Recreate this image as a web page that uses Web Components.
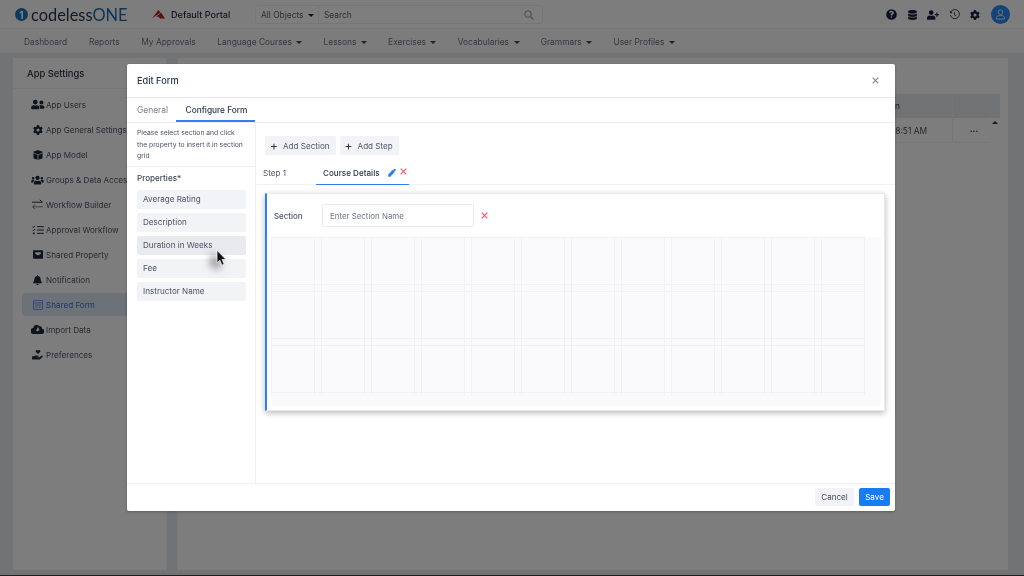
<!DOCTYPE html>
<html><head><meta charset="utf-8"><style>
html,body{margin:0;padding:0;height:100%;overflow:hidden;background:#e4e7ea;font-family:Inter,"Liberation Sans",sans-serif}
</style></head><body>
<app-root></app-root>
<script>
const I={
help:'<svg viewBox="0 0 512 512" width="11" height="11"><path fill="currentColor" d="M256 8a248 248 0 1 0 0 496 248 248 0 0 0 0-496zm0 400a36 36 0 1 1 0-72 36 36 0 0 1 0 72zm44-122v6a12 12 0 0 1-12 12h-64a12 12 0 0 1-12-12v-12c0-42 26-60 48-72 18-10 28-16 28-30 0-18-22-30-40-30-24 0-34 11-50 31a12 12 0 0 1-16 2l-38-28a12 12 0 0 1-3-16c26-39 60-61 112-61 55 0 113 43 113 99 0 75-66 76-66 111z"/></svg>',
db:'<svg viewBox="0 0 448 512" width="9" height="10"><path fill="currentColor" d="M448 73v46c0 40-100 73-224 73S0 159 0 119V73C0 33 100 0 224 0s224 33 224 73zm0 103v103c0 40-100 73-224 73S0 319 0 279V176c48 33 136 48 224 48s176-15 224-48zm0 160v103c0 40-100 73-224 73S0 479 0 439V336c48 33 136 48 224 48s176-15 224-48z"/></svg>',
userplus:'<svg viewBox="0 0 640 512" width="12" height="10"><path fill="currentColor" d="M624 208h-64v-64a16 16 0 0 0-16-16h-32a16 16 0 0 0-16 16v64h-64a16 16 0 0 0-16 16v32a16 16 0 0 0 16 16h64v64a16 16 0 0 0 16 16h32a16 16 0 0 0 16-16v-64h64a16 16 0 0 0 16-16v-32a16 16 0 0 0-16-16zM224 256a128 128 0 1 0 0-256 128 128 0 0 0 0 256zm90 32h-17a174 174 0 0 1-146 0h-17C60 288 0 348 0 422v42a48 48 0 0 0 48 48h352a48 48 0 0 0 48-48v-42c0-74-60-134-134-134z"/></svg>',
history:'<svg viewBox="0 0 24 24" width="11" height="11" fill="none" stroke="currentColor" stroke-width="1.900"><path d="M4 6.500A10 10 0 1 1 3 13"/><path fill="currentColor" stroke="none" d="M2 3v6h6z"/><path d="M12 7v6l4 2"/></svg>',
gear:'<svg viewBox="0 0 512 512" width="10" height="10"><path fill="currentColor" d="M487 316l-43-25a196 196 0 0 0 0-70l43-25c5-3 7-9 5-14-11-36-30-68-55-95a12 12 0 0 0-15-2l-43 25a190 190 0 0 0-61-35V25c0-6-4-11-9-12a197 197 0 0 0-110 0c-5 1-9 6-9 12v50a192 192 0 0 0-61 35l-43-25a12 12 0 0 0-15 2c-25 27-44 59-55 95-2 5 0 11 5 14l43 25a196 196 0 0 0 0 70l-43 25c-5 3-7 9-5 14 11 36 30 68 55 95a12 12 0 0 0 15 2l43-25a190 190 0 0 0 61 35v50c0 6 4 11 9 12a197 197 0 0 0 110 0c5-1 9-6 9-12v-50a192 192 0 0 0 61-35l43 25a12 12 0 0 0 15-2c25-27 44-59 55-95 2-5 0-11-5-14zM256 336a80 80 0 1 1 0-160 80 80 0 0 1 0 160z"/></svg>',
users:'<svg viewBox="0 0 640 512" width="14" height="11"><path fill="currentColor" d="M192 256a112 112 0 1 0 0-224 112 112 0 0 0 0 224zm77 32h-8a155 155 0 0 1-138 0h-8C51 288 0 339 0 403v29a48 48 0 0 0 48 48h288a48 48 0 0 0 48-48v-29c0-64-51-115-115-115zm211-32a96 96 0 1 0 0-192 96 96 0 0 0 0 192zm48 32h-4c-14 5-29 8-44 8s-30-3-44-8h-4c-20 0-39 6-55 16 24 26 39 60 39 99v38c0 2-1 4-1 7h161a48 48 0 0 0 48-48c0-62-50-112-112-112z"/></svg>',
box:'<svg viewBox="0 0 512 512" width="10" height="10"><path fill="currentColor" d="M239 7a48 48 0 0 1 34 0l200 75c9 4 15 12 15 22v22L256 225 24 126v-22c0-10 6-18 15-22zM24 166l212 91v247L39 430a24 24 0 0 1-15-22zm464 0v242c0 10-6 18-15 22l-197 74V257z"/></svg>',
groups:'<svg viewBox="0 0 640 512" width="13" height="10"><path fill="currentColor" d="M96 224a64 64 0 1 0 0-128 64 64 0 0 0 0 128zm448 0a64 64 0 1 0 0-128 64 64 0 0 0 0 128zm32 32h-64c-18 0-34 7-45 19 40 22 69 62 75 109h66c18 0 32-14 32-32v-32c0-35-29-64-64-64zm-256 0a112 112 0 1 0 0-224 112 112 0 0 0 0 224zm77 32h-8a155 155 0 0 1-138 0h-8c-64 0-115 51-115 115v29a48 48 0 0 0 48 48h288a48 48 0 0 0 48-48v-29c0-64-51-115-115-115zM173 275c-11-12-27-19-45-19H64c-35 0-64 29-64 64v32c0 18 14 32 32 32h66c6-47 35-87 75-109z"/></svg>',
workflow:'<svg viewBox="0 0 14 12" width="13" height="11" fill="none" stroke="currentColor"><path d="M1 3.500h11M9.500 1l3 2.500"/><path d="M13 8.500H2M4.500 6l-3 2.500 3 2.500" opacity=".6"/></svg>',
approval:'<svg viewBox="0 0 14 12" width="12" height="10" fill="none" stroke="currentColor" stroke-width="1.200"><path d="M6 2h8M6 6h8M6 10h8M.5 2l1 1 1.800-2M.5 6l1 1 1.800-2"/><circle cx="2" cy="10" r=".7"/></svg>',
share:'<svg viewBox="0 0 14 12" width="10" height="9"><path fill="currentColor" fill-rule="evenodd" d="M1 0h12a1 1 0 0 1 1 1v10a1 1 0 0 1-1 1H1a1 1 0 0 1-1-1V1a1 1 0 0 1 1-1zm2 3v2l4 2.500L11 5V3z"/></svg>',
bell:'<svg viewBox="0 0 448 512" width="9" height="10"><path fill="currentColor" d="M224 512c35 0 64-29 64-64H160c0 35 29 64 64 64zm215-150c-19-21-55-52-55-154 0-78-55-140-128-155V32a32 32 0 1 0-64 0v21C119 68 64 130 64 208c0 102-36 133-55 154-6 6-9 14-9 22 0 16 13 32 32 32h384c19 0 32-16 32-32 0-8-3-16-9-22z"/></svg>',
form:'<svg viewBox="0 0 14 14" width="10" height="10" fill="none" stroke="currentColor"><rect x=".6" y=".6" width="12.800" height="12.800" rx="1"/><path d="M.6 4h12.800M3 7h8M3 10h3M8 10h3" /></svg>',
cloud:'<svg viewBox="0 0 640 512" width="13" height="11"><path fill="currentColor" d="M537 222a96 96 0 0 0-129-121A160 160 0 0 0 112 180v4A144 144 0 0 0 144 480h368a128 128 0 0 0 25-258zM393 289l-65 65v0h-16l-65-65c-10-10-3-27 11-27h41V176a16 16 0 0 1 16-16h48a16 16 0 0 1 16 16v86h41c14 0 21 17 11 27z"/></svg>',
hand:'<svg viewBox="0 0 14 13" width="12" height="11"><path fill="currentColor" d="M7 6 4.600 3.600a1.400 1.400 0 0 1 2-2L7 2l.4-.4a1.400 1.400 0 0 1 2 2zM0 8.500h2.500L4 7.700h3c1 0 1 1.600 0 1.600H5.500v.5h3l2.800-1.900c1-.6 2 .7 1 1.500L9 12.500H0z"/></svg>',
pencil:'<svg viewBox="0 0 512 512" width="8" height="8"><path fill="currentColor" d="M290 74l148 148L116 544 0 512l-2-116zM497 52L460 15a48 48 0 0 0-68 0l-68 68 105 105 68-68a48 48 0 0 0 0-68z" transform="translate(10 -20) scale(.97)"/></svg>',
x:'<svg viewBox="0 0 10 10" width="7" height="7" fill="none" stroke="currentColor" stroke-width="1.700"><path d="M1 1l8 8M9 1l-8 8"/></svg>'
};
function def(name,css,html){
  customElements.define(name,class extends HTMLElement{
    constructor(){super();const r=this.attachShadow({mode:'open'});r.innerHTML='<style>'+css+'</style>'+(typeof html==='function'?html(this):html);}
  });
}
def('brand-logo',`:host{display:flex;align-items:center;width:114px;color:#1b3a5c}
 .c{width:13px;height:13px;border-radius:50%;background:#1a72b8;display:flex;align-items:center;justify-content:center;color:#fff;font:700 10px Inter,sans-serif;margin-right:3px;flex:none}
 .t{font:400 16.400px Lato,sans-serif;color:#27364a;white-space:nowrap}.t b{font-weight:400;color:#1f66a8}`,
 `<span class="c">1</span><span class="t">codeless<b>ONE</b></span>`);
def('portal-name',`:host{display:flex;align-items:center;gap:6px;font:500 9.100px Inter,sans-serif;color:#1c2940;width:103px;white-space:nowrap}
 svg{display:block}`,`<svg width="13" height="9" viewBox="0 0 13 9"><path fill="#b02020" d="M0 8.500 6.500 0l2 2.500-5 3.500zM4 6.500 7 4.500 9 2.500 13 8.500H8L6.500 6.800z"/></svg><span>Default Portal</span>`);
def('search-box',`:host{display:flex;align-items:center;width:288px;height:19px;box-sizing:border-box;border:1px solid #eaecef;border-radius:3px;background:#fcfcfd;font:400 8.400px Inter,sans-serif;color:#5b6272}
 .a{width:63px;display:flex;align-items:center;justify-content:flex-start;padding-left:5px;gap:4px;border-right:1px solid #eaecef;height:100%;box-sizing:border-box;white-space:nowrap}
 .car{border:3px solid transparent;border-top-color:#222;border-bottom:0;margin-top:1px}
 .s{flex:1;padding-left:5px}
 svg{margin-right:8px;color:#9aa0a8}`,`<span class="a">All Objects <i class="car"></i></span><span class="s">Search</span><svg width="10" height="10" viewBox="0 0 10 10" fill="none" stroke="currentColor" stroke-width="1.100"><circle cx="4" cy="4" r="3.200"/><path d="M6.500 6.500L9.500 9.500"/></svg>`);
def('top-bar',`:host{display:flex;align-items:center;height:29px;box-sizing:border-box;padding:1px 14.500px 0 15px;background:#fbfbfb;border-bottom:1px solid #eef0f2;color:#14213a;flex:none}
 .g{margin-left:auto;display:flex;align-items:center;gap:9px}
 .g span{display:flex;width:12px;justify-content:center}
 .av{width:19px!important;height:19px;border-radius:50%;background:#2a86ee;color:#dbe9fb;align-items:center;margin-left:.5px}
 brand-logo{margin-right:23px}`,`<brand-logo></brand-logo><portal-name></portal-name><search-box></search-box><div class="g"><span>${I.help}</span><span>${I.db}</span><span>${I.userplus}</span><span style="color:#2e3848">${I.history}</span><span>${I.gear}</span><span class="av"><svg width="11" height="11" viewBox="0 0 12 12" fill="none" stroke="currentColor"><circle cx="6" cy="3.500" r="2.500"/><path d="M1.500 11c0-3 1.500-4 4.500-4s4.500 1 4.500 4z"/></svg></span></div>`);
def('nav-item',`:host{display:inline-flex;align-items:center;gap:4.500px;font:400 8.400px Inter,sans-serif;color:#6a7280;white-space:nowrap}
 i{border:3px solid transparent;border-top-color:#3f4650;border-bottom:0;margin:1px -.5px 0 0;display:none}
 :host([menu]) i{display:block}`,`<slot></slot><i></i>`);
def('nav-bar',`:host{display:flex;align-items:center;height:24px;gap:21.700px;padding:1px 0 0 24px;background:#f8f9fb;box-sizing:border-box;flex:none}`,`<slot></slot>`);
def('side-item',`:host{display:flex;align-items:center;height:23px;margin:0 0 2px 9px;padding-left:8px;font:400 8.100px Inter,sans-serif;color:#4a5364;border-radius:4px;white-space:nowrap;overflow:hidden}
 :host([active]){background:#dbe4f1;color:#2b73d6}
 .i{width:15px;margin-right:1px;display:flex;justify-content:center;color:#1c2838}
 :host([active]) .i{color:#2b73d6}`,h=>`<span class="i">${I[h.getAttribute('icon')]}</span><slot></slot>`);
def('side-panel',`:host{display:block;width:154px;box-sizing:border-box;background:#fbfbfb;border-right:1px solid #f0f0f2;align-self:stretch;flex:none;overflow:hidden}
 h3{margin:0;height:30px;display:flex;align-items:center;padding-left:14px;font:500 9.400px Inter,sans-serif;color:#27303f;border-bottom:1px solid #eceef1}
 .l{padding-top:4px}`,`<h3>App Settings</h3><div class="l"><slot></slot></div>`);
def('main-panel',`:host{display:block;flex:1;background:#fbfbfb;border-left:1px solid #eeeef1;position:relative}
 .tb{margin:36px 0 0 0}
 .h{display:flex;justify-content:flex-end;height:24px;margin-right:8px;background:#e2e5e9;font:400 8.400px Inter,sans-serif;color:#333;align-items:center}
 .r{display:flex;justify-content:flex-end;height:25px;box-sizing:border-box;padding-top:1px;font:400 8.400px Inter,sans-serif;color:#4a5260;align-items:center;margin-right:18px;border-bottom:1px solid #eeeff1}
 .c{width:38px;box-sizing:border-box;text-align:center;border-left:1px solid #eaebee;height:100%;display:flex;align-items:center;justify-content:center;font-weight:700;padding-left:5px;color:#222}
 .e{width:10px;box-sizing:border-box;height:100%;border-left:1px solid #eaebee}
 .up{position:absolute;right:10px;top:63px;border:3px solid transparent;border-bottom-color:#333;border-top:0}`,
 `<div class="tb"><div class="h"><span style="margin-right:52px">Modified On</span><span class="c"></span><span class="e"></span></div><div class="r"><span style="margin-right:25px;white-space:nowrap">10:48:51 AM</span><span class="c">···</span></div></div><i class="up"></i>`);
def('prop-item',`:host{display:flex;align-items:center;height:19px;padding-left:6px;margin-bottom:4px;background:#f2f3f7;border-radius:2px;font:400 8.100px Inter,sans-serif;color:#4a5365;white-space:nowrap}
 :host([hover]){background:#e9eaee}`,`<slot></slot>`);
def('ghost-btn',`:host{display:inline-flex;align-items:center;gap:4px;height:19px;padding:0 6px 0 4px;background:#f2f3f7;border-radius:2px;font:400 8.100px Inter,sans-serif;color:#4f5868;white-space:nowrap}
 b{font:400 12px Inter,sans-serif;color:#333;line-height:1;width:10px;text-align:center}`,`<b>+</b><slot></slot>`);
def('section-grid',`:host{display:block;height:169px;background-color:#fafafc;margin:10px 3px 0 4px;padding:0}
 .g{display:grid;grid-template-columns:repeat(12,43px);grid-auto-rows:47px;gap:7px;width:594px;height:158px;
 background-image:linear-gradient(90deg,#f1f1f4 1px,transparent 1px,transparent 43px,#f1f1f4 43px,#f1f1f4 44px,transparent 44px),linear-gradient(#f1f1f4 1px,transparent 1px,transparent 47px,#f1f1f4 47px,#f1f1f4 48px,transparent 48px);
 background-size:50px 54px}`,`<div class="g"></div>`);
def('form-section',`:host{display:block;box-sizing:border-box;height:218px;margin:8px 10px 0 9px;background:#fff;border:1px solid #e8eaee;border-left:2px solid #2f80ed;box-shadow:0 2px 6px rgba(0,0,0,.28);padding-top:10px}
 .t{display:flex;align-items:center;padding-left:7px}
 label{width:48px;font:500 7.900px Inter,sans-serif;color:#4b5364}
 .inp{width:152px;height:23px;box-sizing:border-box;border:1px solid #e9ebef;border-radius:2px;display:flex;align-items:center;padding-left:7px;font:400 7.900px Inter,sans-serif;color:#6d7482;white-space:nowrap}
 .x{color:#ea5a6a;margin-left:6.500px;display:flex}`,`<div class="t"><label>Section</label><div class="inp">Enter Section Name</div><span class="x">${I.x}</span></div><section-grid></section-grid>`);
def('edit-modal',`:host{position:absolute;left:127px;top:64px;width:768px;height:447px;background:#fff;border-radius:2px;display:flex;flex-direction:column;box-shadow:0 1px 3px rgba(0,0,0,.25);overflow:hidden;filter:blur(.3px)}
 header{height:34px;box-sizing:border-box;display:flex;align-items:center;justify-content:space-between;padding:0 16px 0 10px;border-bottom:1px solid #e6e7ea;font:500 9.200px Inter,sans-serif;color:#1f2f4d}
 header span{color:#7c8a9e;display:flex}
 .tabs{height:25px;box-sizing:border-box;display:flex;border-bottom:1px solid #eceef1;padding-left:10px;gap:8px;font:400 8.450px Inter,sans-serif;color:#7a8190;align-items:center}
 .tabs>span:first-child{margin-top:-1px}
 .tabs .on{color:#27344d;font-weight:500;font-size:8.300px;height:100%;width:79px;box-sizing:border-box;display:flex;align-items:center;padding:0 0 1px 9.500px;white-space:nowrap;box-shadow:inset 0 -2px #2f80ed}
 .body{flex:1;display:flex;min-height:0}
 .left{width:129px;box-sizing:border-box;flex:none;border-right:1px solid #eceef1}
 .hint{height:44px;box-sizing:border-box;padding:4px 0 0 10px;font:400 6.750px/11.600px Inter,sans-serif;color:#4a5365;border-bottom:1px solid #eceef1;white-space:nowrap}
 .pt{font:500 8.100px/10px Inter,sans-serif;color:#3b4456;margin:6px 0 6.500px 10px}
 .pl{margin:0 9px 0 10px}
 .right{flex:1;min-width:0}
 .btns{display:flex;gap:4px;padding:13px 0 0 9px}
 .steps{height:30px;box-sizing:border-box;display:flex;align-items:stretch;border-bottom:1px solid #f0f1f4;font:400 8.100px Inter,sans-serif;color:#4a5365;padding-left:7px;white-space:nowrap}
 .steps>span{padding-top:13px}
 .cd{margin:0 0 -1px 30px;width:93px;box-sizing:border-box;display:flex;align-items:flex-start;padding:13px 0 0 7px;color:#2a3345;font-weight:500;border-bottom:1px solid #2f80ed}
 .cd span{margin-left:8px;color:#2f80ed;display:flex;margin-top:1px}.cd em{margin-left:4px;color:#ea5a6a;display:flex;margin-top:0}
 footer{height:28px;box-sizing:border-box;border-top:1px solid #f0f1f3;display:flex;justify-content:flex-end;align-items:center;gap:5px;padding:0 5px 1px 0;font:400 8.100px Inter,sans-serif}
 footer div{height:18px;display:flex;align-items:center;justify-content:center;border-radius:2px}
 .cancel{width:39px;background:#f2f3f7;color:#444c5a}.save{width:31px;background:#1a7cf2;color:#fff}`,
 `<header>Edit Form<span>${I.x}</span></header>
 <div class="tabs"><span>General</span><span class="on">Configure Form</span></div>
 <div class="body"><div class="left"><div class="hint">Please select section and click<br>the property to insert it in section<br>grid</div><div class="pt">Properties*</div><div class="pl"><prop-item>Average Rating</prop-item><prop-item>Description</prop-item><prop-item hover>Duration in Weeks</prop-item><prop-item>Fee</prop-item><prop-item>Instructor Name</prop-item></div></div>
 <div class="right"><div class="btns"><ghost-btn>Add Section</ghost-btn><ghost-btn>Add Step</ghost-btn></div><div class="steps"><span>Step 1</span><div class="cd">Course Details<span>${I.pencil}</span><em>${I.x}</em></div></div><form-section></form-section></div></div>
 <footer><div class="cancel">Cancel</div><div class="save">Save</div></footer>`);
def('mouse-cursor',`:host{position:absolute;left:216px;top:250px;width:11px;height:16px;filter:drop-shadow(-5px 4px 4px rgba(0,0,0,.65))}svg{display:block}`,`<svg width="11" height="16" viewBox="0 0 11 18"><path d="M.5.500v14l3.200-3 2.300 5.500 2.400-1-2.300-5.300h4.400z" fill="#111" stroke="#fff" stroke-width=".7"/></svg>`);
def('app-root',`:host{display:flex;flex-direction:column;position:relative;width:1024px;height:576px;overflow:hidden;background:#e4e7ea}
 .bg{position:absolute;inset:0;display:flex;flex-direction:column;filter:blur(.45px)}
 .c{flex:1;display:flex;gap:10px;padding:5px 16px 6px 13px;min-height:0}
 .edge{position:absolute;left:0;right:0;bottom:0;height:1px;background:#1e1e1e;z-index:3}
 .dim{position:absolute;inset:0;background:rgba(0,0,0,.5)}`,
 `<div class="bg"><top-bar></top-bar><nav-bar><nav-item>Dashboard</nav-item><nav-item>Reports</nav-item><nav-item>My Approvals</nav-item><nav-item menu>Language Courses</nav-item><nav-item menu>Lessons</nav-item><nav-item menu>Exercises</nav-item><nav-item menu>Vocabularies</nav-item><nav-item menu>Grammars</nav-item><nav-item menu>User Profiles</nav-item></nav-bar>
 <div class="c"><side-panel><side-item icon="users">App Users</side-item><side-item icon="gear">App General Settings</side-item><side-item icon="box">App Model</side-item><side-item icon="groups">Groups &amp; Data Access</side-item><side-item icon="workflow">Workflow Builder</side-item><side-item icon="approval">Approval Workflow</side-item><side-item icon="share">Shared Property</side-item><side-item icon="bell">Notification</side-item><side-item icon="form" active>Shared Form</side-item><side-item icon="cloud">Import Data</side-item><side-item icon="hand">Preferences</side-item></side-panel><main-panel></main-panel></div></div>
 <div class="dim"></div><edit-modal></edit-modal><mouse-cursor></mouse-cursor><div class="edge"></div>`);
</script></body></html>
